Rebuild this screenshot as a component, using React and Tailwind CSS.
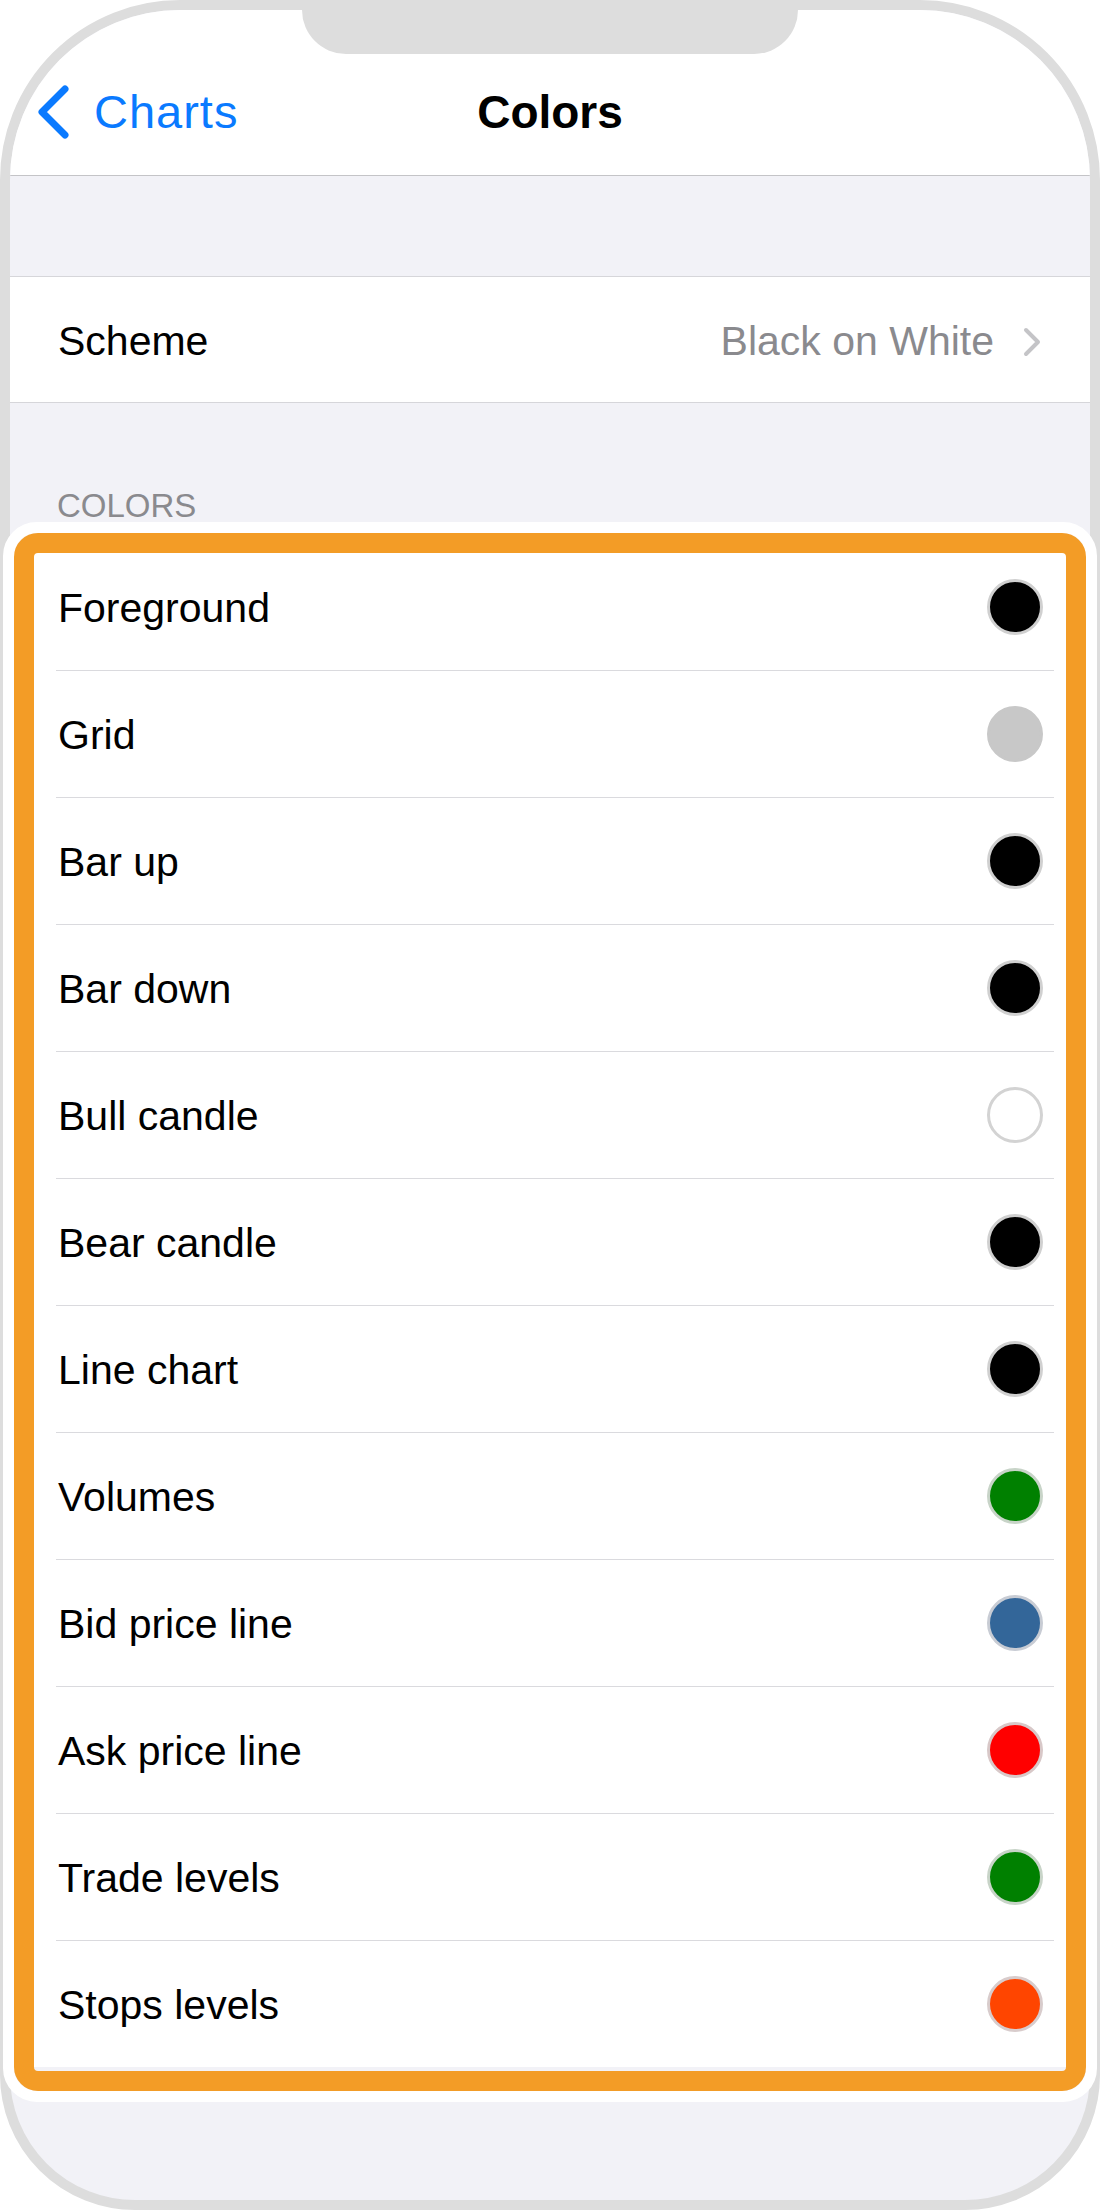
import React from "react";

const rows = [
  { label: "Foreground", bg: "bg-[#000000]", border: "border-[#d0d0d0]" },
  { label: "Grid", bg: "bg-[#c8c8c8]", border: "border-[#c8c8c8]" },
  { label: "Bar up", bg: "bg-[#000000]", border: "border-[#d0d0d0]" },
  { label: "Bar down", bg: "bg-[#000000]", border: "border-[#d0d0d0]" },
  { label: "Bull candle", bg: "bg-white", border: "border-[#d3d3d3]" },
  { label: "Bear candle", bg: "bg-[#000000]", border: "border-[#d0d0d0]" },
  { label: "Line chart", bg: "bg-[#000000]", border: "border-[#d0d0d0]" },
  { label: "Volumes", bg: "bg-[#008000]", border: "border-[#c8d4c8]" },
  { label: "Bid price line", bg: "bg-[#336699]", border: "border-[#c8ccd4]" },
  { label: "Ask price line", bg: "bg-[#ff0000]", border: "border-[#d8c8c8]" },
  { label: "Trade levels", bg: "bg-[#008000]", border: "border-[#c8d4c8]" },
  { label: "Stops levels", bg: "bg-[#ff4500]", border: "border-[#d8cccc]" },
];

export default function App() {
  return (
    <div className="relative w-[1100px] h-[2210px] bg-white font-['Liberation_Sans',Arial,sans-serif]">
      <div className="relative w-[1100px] h-[2210px] border-[10px] border-[#dddddd] rounded-t-[180px] rounded-b-[135px] overflow-hidden bg-[#f2f2f7]">
        {/* Nav bar */}
        <div className="h-[166px] bg-white border-b border-[#c4c4c7] pt-[70px]">
          <div className="grid grid-cols-[1fr_auto_1fr] items-center h-[64px]">
            <div className="flex items-center pl-[26px]">
              <svg width="36" height="56" viewBox="0 0 36 56" className="mr-[22px]">
                <path d="M29 5 L6 28 L29 51" fill="none" stroke="#0a7aff" strokeWidth="7" strokeLinecap="round" strokeLinejoin="round" />
              </svg>
              <span className="text-[47px] leading-[64px] text-[#0a7aff] tracking-[1px]">Charts</span>
            </div>
            <div className="text-[46px] leading-[64px] font-bold text-black">Colors</div>
            <div />
          </div>
        </div>

        <div className="h-[100px]" />

        {/* Scheme row */}
        <div className="h-[127px] bg-white border-y border-[#d6d6da] flex items-center justify-between pl-[48px] pr-[49px]">
          <span className="text-[41px] text-black pt-[4px]">Scheme</span>
          <div className="flex items-center pt-[4px]">
            <span className="text-[41px] text-[#8a8a8e]">Black on White</span>
            <svg width="18" height="30" viewBox="0 0 18 30" className="ml-[29px]">
              <path d="M3 3 L15 15 L3 27" fill="none" stroke="#c4c4c7" strokeWidth="4" strokeLinecap="round" strokeLinejoin="round" />
            </svg>
          </div>
        </div>

        {/* Header */}
        <div className="pt-[86px] pb-[22px] pl-[47px]">
          <div className="text-[33px] leading-[33px] text-[#8a8a8e]">COLORS</div>
        </div>

        {/* List */}
        <div className="bg-white">
          {rows.map((r, i) => (
            <div key={r.label}>
              <div className="h-[126px] flex items-center justify-between pl-[48px] pr-[47px]">
                <span className="text-[41px] text-black pt-[4px]">{r.label}</span>
                <div className={`w-[56px] h-[56px] rounded-full border-[3px] ${r.bg} ${r.border}`} />
              </div>
              {i < rows.length - 1 && (
                <div className="h-px bg-[#dadade] ml-[46px] mr-[36px]" />
              )}
            </div>
          ))}
        </div>

        {/* Notch */}
        <div className="absolute top-0 left-[292px] w-[496px] h-[44px] bg-[#dddddd] rounded-b-[46px]" />
      </div>

      {/* Highlight overlay */}
      <div className="absolute left-[3px] top-[522px] w-[1094px] h-[1580px] border-[11px] border-white rounded-[34px] pointer-events-none">
        <div className="w-full h-full border-[20px] border-[#f39c26] rounded-[24px]" />
      </div>
    </div>
  );
}
